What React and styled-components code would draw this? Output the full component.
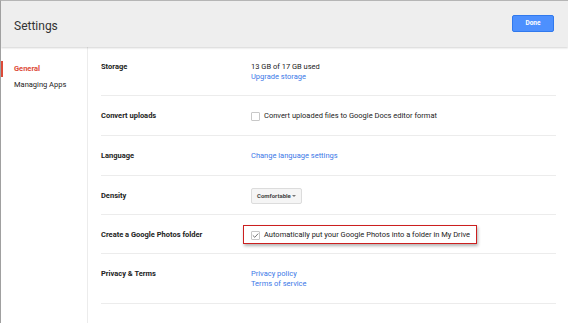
import React from "react";
import styled, { createGlobalStyle } from "styled-components";

const Global = createGlobalStyle`
  html, body { margin: 0; padding: 0; background: #fff; }
  body { font-family: Roboto, "Liberation Sans", Arial, sans-serif; color: #222; }
  * { box-sizing: border-box; }
`;

const Frame = styled.div`
  width: 568px;
  height: 323px;
  border-top: 1px solid #b5b5b5;
  border-left: 1px solid #a0a0a0;
  display: flex;
  flex-direction: column;
  overflow: hidden;
`;

const Header = styled.header`
  height: 46px;
  flex: none;
  background: #eeeeee;
  box-shadow: 0 1px 2px rgba(0, 0, 0, 0.18);
  display: flex;
  align-items: center;
  justify-content: space-between;
  padding: 0 14px 0 13px;
  position: relative;
  z-index: 1;
`;

const Title = styled.h1`
  margin: 3px 0 0;
  font-size: 12px;
  font-weight: 400;
  color: #333;
`;

const DoneButton = styled.button`
  width: 42px;
  height: 17px;
  margin-bottom: 2px;
  border: 1px solid #3079ed;
  background: #4d90fe;
  color: #fff;
  font-family: inherit;
  font-size: 6.5px;
  font-weight: 700;
  border-radius: 2px;
  padding: 0;
`;

const Body = styled.div`
  flex: 1;
  display: flex;
`;

const Sidebar = styled.nav`
  width: 87px;
  flex: none;
  border-right: 1px solid #ececec;
  padding-top: 14px;
  display: flex;
  flex-direction: column;
`;

const NavItem = styled.div`
  height: 16px;
  line-height: 16px;
  font-size: 7.5px;
  margin-left: -1px;
  padding-left: ${(p) => (p.$active ? 11 : 14)}px;
  border-left: ${(p) => (p.$active ? "3px solid #dd4b39" : "none")};
  color: ${(p) => (p.$active ? "#dd4b39" : "#222")};
  font-weight: ${(p) => (p.$active ? 700 : 400)};
`;

const Content = styled.main`
  flex: 1;
  padding: 0 12px 0 13px;
`;

const Row = styled.div`
  display: grid;
  grid-template-columns: 150px 1fr;
  padding: 15px 0 ${(p) => (p.$tight ? 13 : 14)}px;
  border-bottom: 1px solid #ececec;
  line-height: 10px;
  font-size: 7.5px;
`;

const Label = styled.div`
  font-weight: 700;
  color: #222;
`;

const Value = styled.div`
  display: flex;
  flex-direction: column;
  align-items: flex-start;
  color: #222;
`;

const Link = styled.a`
  color: #3b78e7;
  text-decoration: none;
`;

const CheckLine = styled.label`
  display: flex;
  align-items: center;
  gap: 4px;
`;

const Box = styled.span`
  width: 9px;
  height: 9px;
  border: 1px solid #c8c8c8;
  border-radius: 1px;
  background: #fff;
  display: inline-flex;
  align-items: center;
  justify-content: center;
  flex: none;
`;

const Highlight = styled.div`
  border: 1px solid #cc1f1f;
  box-shadow: 1px 2px 3px rgba(0, 0, 0, 0.3);
  margin: -5px 0 -4px -8px;
  padding: 4px 6px 3px 7px;
  background: #fff;
`;

const Select = styled.div`
  height: 16px;
  width: 51px;
  margin: -3px 0;
  display: flex;
  align-items: center;
  justify-content: space-between;
  padding: 0 5px 0 5px;
  background: #f5f5f5;
  border: 1px solid #dcdcdc;
  border-radius: 2px;
  font-size: 6px;
  font-weight: 700;
  color: #444;
`;

const Caret = styled.span`
  width: 0;
  height: 0;
  border-left: 2px solid transparent;
  border-right: 2px solid transparent;
  border-top: 2px solid #777;
`;

const Check = () => (
  <svg width="7" height="7" viewBox="0 0 7 7">
    <path d="M0.8 3.4 L2.8 5.3 L6.2 1.6" fill="none" stroke="#666" strokeWidth="0.9" />
  </svg>
);

export default function App() {
  return (
    <>
      <Global />
      <Frame>
        <Header>
          <Title>Settings</Title>
          <DoneButton>Done</DoneButton>
        </Header>
        <Body>
          <Sidebar>
            <NavItem $active>General</NavItem>
            <NavItem>Managing Apps</NavItem>
          </Sidebar>
          <Content>
            <Row $tight>
              <Label>Storage</Label>
              <Value>
                <span>13 GB of 17 GB used</span>
                <Link>Upgrade storage</Link>
              </Value>
            </Row>
            <Row>
              <Label>Convert uploads</Label>
              <Value>
                <CheckLine>
                  <Box />
                  Convert uploaded files to Google Docs editor format
                </CheckLine>
              </Value>
            </Row>
            <Row>
              <Label>Language</Label>
              <Value>
                <Link>Change language settings</Link>
              </Value>
            </Row>
            <Row $tight>
              <Label>Density</Label>
              <Value>
                <Select>
                  Comfortable <Caret />
                </Select>
              </Value>
            </Row>
            <Row $tight>
              <Label>Create a Google Photos folder</Label>
              <Value>
                <Highlight>
                  <CheckLine>
                    <Box>
                      <Check />
                    </Box>
                    Automatically put your Google Photos into a folder in My Drive
                  </CheckLine>
                </Highlight>
              </Value>
            </Row>
            <Row>
              <Label>Privacy &amp; Terms</Label>
              <Value>
                <Link>Privacy policy</Link>
                <Link>Terms of service</Link>
              </Value>
            </Row>
          </Content>
        </Body>
      </Frame>
    </>
  );
}
